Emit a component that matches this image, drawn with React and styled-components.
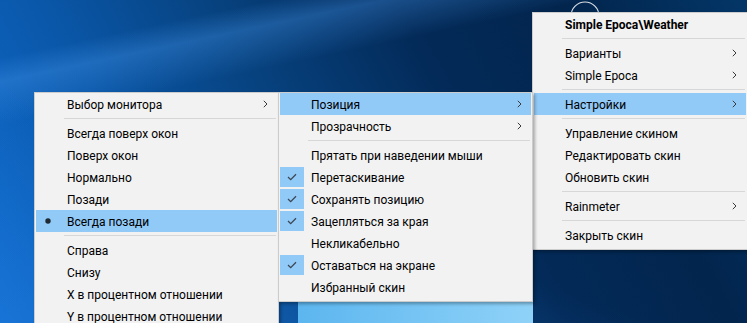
import React from "react";
import styled, { createGlobalStyle } from "styled-components";

const GlobalStyle = createGlobalStyle`
  html, body {
    margin: 0;
    padding: 0;
    background: #02264f;
  }
  body {
    font-family: Roboto, "Segoe UI", sans-serif;
  }
`;

const Desktop = styled.div`
  position: relative;
  width: 747px;
  height: 323px;
  overflow: hidden;
  background:
    linear-gradient(90deg, #5cb6ef, #8fd2f8) 298px 302px / 235px 21px no-repeat,
    linear-gradient(168deg, transparent 0 12%, rgba(70, 150, 235, 0.35) 17%, transparent 26%),
    linear-gradient(200deg, transparent 0 60%, rgba(40, 130, 230, 0.35) 100%),
    linear-gradient(62deg, #0f6cce 0%, #0a58ab 22%, #07427f 42%, #032a58 62%, #02254d 80%, #033667 100%);
`;

const SkinRing = styled.svg`
  position: absolute;
  left: 569px;
  top: 0;
`;

const Menu = styled.div`
  position: absolute;
  left: ${(p) => p.$left}px;
  top: ${(p) => p.$top}px;
  width: ${(p) => p.$width}px;
  z-index: ${(p) => p.$z};
  box-sizing: border-box;
  padding: 0 1px 3px;
  background: #f2f2f2;
  border: 1px solid #cccccc;
  box-shadow: 2px 2px 3px rgba(0, 0, 0, 0.3);
  font-size: 12px;
  color: #000;
`;

const Item = styled.div`
  display: flex;
  align-items: center;
  height: 22px;
  background: ${(p) => (p.$active ? "#91c9f7" : "transparent")};
`;

const Gutter = styled.div`
  flex: none;
  display: flex;
  align-items: center;
  justify-content: center;
  width: 24px;
  height: 20px;
  margin-right: 7px;
  background: ${(p) => (p.$checked ? "#91c9f7" : "transparent")};
`;

const Label = styled.span`
  flex: 1;
  padding-top: 1px;
  white-space: nowrap;
  font-weight: ${(p) => (p.$bold ? 700 : 400)};
`;

const Arrow = styled.div`
  flex: none;
  display: flex;
  align-items: center;
  justify-content: center;
  width: 24px;
`;

const Separator = styled.div`
  display: flex;
  align-items: center;
  height: 7px;
  margin: 0 1px 0 28px;

  &::after {
    content: "";
    flex: 1;
    height: 1px;
    background: #d7d7d7;
  }
`;

const Check = () => (
  <svg width="10" height="8" viewBox="0 0 10 8">
    <polyline points="1,4 3.7,6.6 9,1.2" fill="none" stroke="#3b4754" strokeWidth="1.3" />
  </svg>
);

const Bullet = () => (
  <svg width="6" height="6" viewBox="0 0 6 6">
    <circle cx="3" cy="3" r="2.7" fill="#1f2a33" />
  </svg>
);

const Chevron = () => (
  <svg width="5" height="8" viewBox="0 0 5 8">
    <polyline points="0.8,0.8 4,4 0.8,7.2" fill="none" stroke="#3a3a3a" strokeWidth="1" />
  </svg>
);

const MenuItem = ({ label, sub, check, bullet, active, bold }) => (
  <Item $active={active}>
    <Gutter $checked={check && !active}>
      {check && <Check />}
      {bullet && <Bullet />}
    </Gutter>
    <Label $bold={bold}>{label}</Label>
    <Arrow>{sub && <Chevron />}</Arrow>
  </Item>
);

const renderEntries = (entries) =>
  entries.map((e, i) =>
    e === "-" ? <Separator key={i} /> : <MenuItem key={i} {...e} />
  );

const monitorMenu = [
  { label: "Выбор монитора", sub: true },
  "-",
  { label: "Всегда поверх окон" },
  { label: "Поверх окон" },
  { label: "Нормально" },
  { label: "Позади" },
  { label: "Всегда позади", bullet: true, active: true },
  "-",
  { label: "Справа" },
  { label: "Снизу" },
  { label: "X в процентном отношении" },
  { label: "Y в процентном отношении" },
];

const settingsMenu = [
  { label: "Позиция", sub: true, active: true },
  { label: "Прозрачность", sub: true },
  "-",
  { label: "Прятать при наведении мыши" },
  { label: "Перетаскивание", check: true },
  { label: "Сохранять позицию", check: true },
  { label: "Зацепляться за края", check: true },
  { label: "Некликабельно" },
  { label: "Оставаться на экране", check: true },
  { label: "Избранный скин" },
];

const skinMenu = [
  { label: "Simple Epoca\\Weather", bold: true },
  "-",
  { label: "Варианты", sub: true },
  { label: "Simple Epoca", sub: true },
  "-",
  { label: "Настройки", sub: true, active: true },
  "-",
  { label: "Управление скином" },
  { label: "Редактировать скин" },
  { label: "Обновить скин" },
  "-",
  { label: "Rainmeter", sub: true },
  "-",
  { label: "Закрыть скин" },
];

const App = () => (
  <>
    <GlobalStyle />
    <Desktop>
      <SkinRing width="34" height="34" viewBox="0 0 34 34">
        <circle cx="16" cy="16" r="14" fill="none" stroke="rgba(255,255,255,0.85)" strokeWidth="1.2" />
      </SkinRing>
      <Menu $left={34} $top={92} $width={245} $z={1}>
        {renderEntries(monitorMenu)}
      </Menu>
      <Menu $left={532} $top={12} $width={216} $z={2}>
        {renderEntries(skinMenu)}
      </Menu>
      <Menu $left={278} $top={92} $width={255} $z={3}>
        {renderEntries(settingsMenu)}
      </Menu>
    </Desktop>
  </>
);

export default App;
